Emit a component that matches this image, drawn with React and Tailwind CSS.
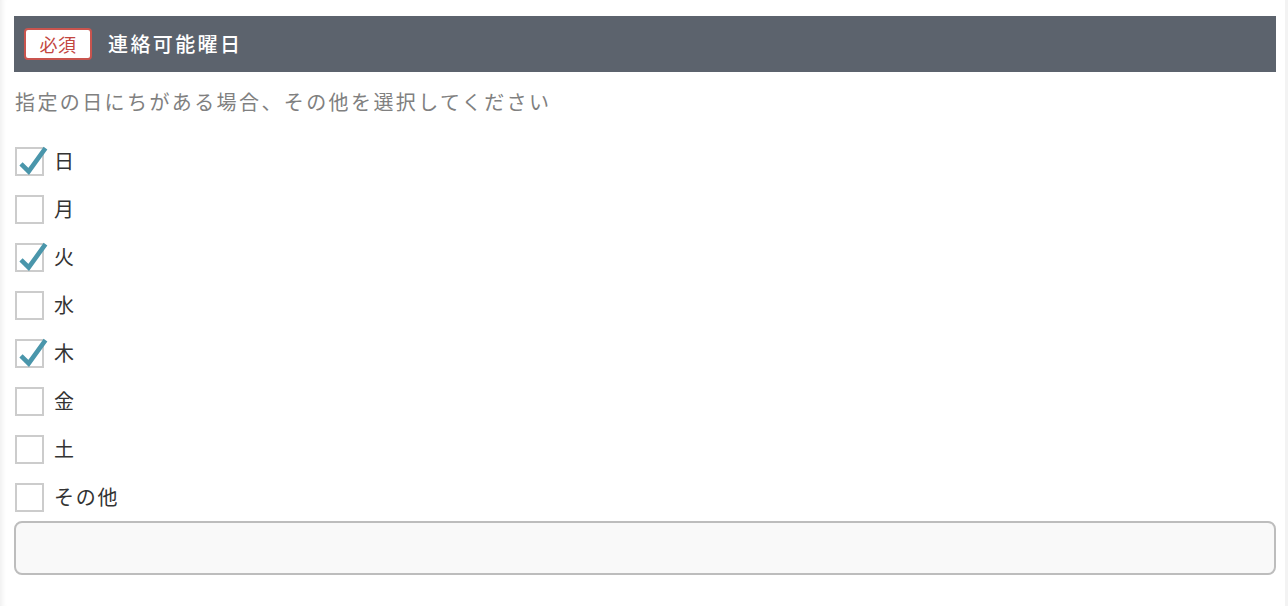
import React from "react";

const days = [
  { label: "日", checked: true },
  { label: "月", checked: false },
  { label: "火", checked: true },
  { label: "水", checked: false },
  { label: "木", checked: true },
  { label: "金", checked: false },
  { label: "土", checked: false },
  { label: "その他", checked: false },
];

function Check({ checked, label }) {
  return (
    <label className="flex items-center h-[48px] gap-[10px]">
      <span className="relative block w-[29px] h-[29px] border-2 border-[#cccccc] bg-white shrink-0">
        {checked && (
          <svg
            className="absolute left-[-2px] top-[-2px] overflow-visible"
            width="29"
            height="29"
            viewBox="0 0 29 29"
          >
            <path
              d="M6 16.8 L13.7 24.4 L30.5 1.2"
              fill="none"
              stroke="#4a96ab"
              strokeWidth="4.6"
              strokeLinejoin="miter"
            />
          </svg>
        )}
      </span>
      <span className="text-[20px] tracking-[1.8px] text-[#333333] leading-none">{label}</span>
    </label>
  );
}

export default function App() {
  return (
    <div
      className="w-full min-h-[606px] bg-white border-r-[3px] border-[#f3f3f3] shadow-[inset_7px_0_6px_-6px_rgba(0,0,0,0.09)]"
      style={{ fontFamily: '"Noto Sans CJK JP", "Noto Sans", sans-serif' }}
    >
      <div className="pt-[16px] pl-[14px] pr-[9px]">
        <div className="h-[56px] bg-[#5c636d] flex items-center pl-[10px]">
          <span className="h-[32px] w-[68px] flex items-center justify-center bg-white border-2 border-[#c9544e] rounded-[4px] text-[#c3463f] text-[18px] tracking-[0.5px]">
            必須
          </span>
          <span className="ml-[16px] text-white text-[20px] font-medium tracking-[2.4px]">
            連絡可能曜日
          </span>
        </div>
        <p className="mt-[17px] text-[#808080] text-[20px] tracking-[2.4px] leading-[26px] pl-[1px]">
          指定の日にちがある場合、その他を選択してください
        </p>
        <div className="mt-[22px] pl-[1px]">
          {days.map((d) => (
            <Check key={d.label} {...d} />
          ))}
        </div>
        <input
          type="text"
          className="mt-[0px] block w-full h-[54px] rounded-[8px] border-2 border-[#bdbdbd] bg-[#f9f9f9] outline-none"
        />
      </div>
    </div>
  );
}
